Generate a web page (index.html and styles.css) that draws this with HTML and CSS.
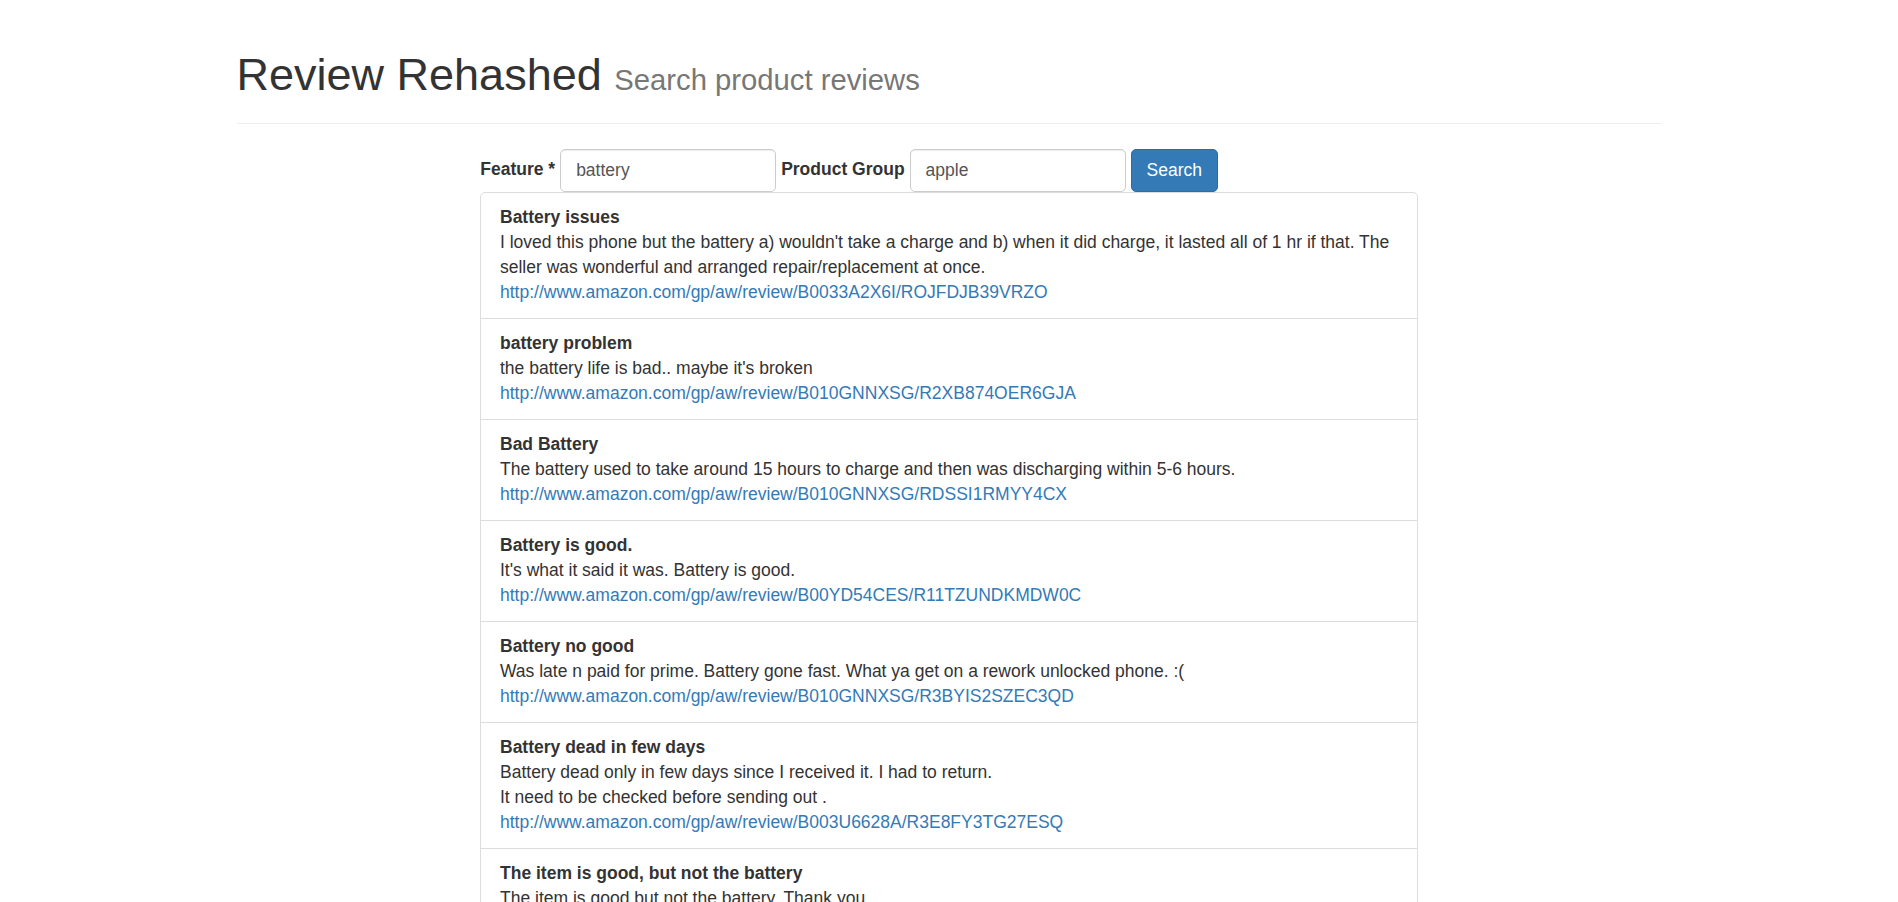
FILE: index.html
```html
<!DOCTYPE html>
<html lang="en">
<head>
<meta charset="utf-8">
<title>Review Rehashed</title>
<link rel="stylesheet" href="styles.css">
</head>
<body>
<div class="container">
  <div class="page-header">
    <h1>Review Rehashed <small>Search product reviews</small></h1>
  </div>
  <div class="main">
    <form class="search-form">
      <label for="feature">Feature *</label>
      <input id="feature" class="form-control" type="text" value="battery">
      <label for="group">Product Group</label>
      <input id="group" class="form-control" type="text" value="apple">
      <button type="button" class="btn">Search</button>
    </form>
    <div class="list-group">
      <div class="list-group-item">
        <div class="title">Battery issues</div>
        <div class="text">I loved this phone but the battery a) wouldn't take a charge and b) when it did charge, it lasted all of 1 hr if that. The seller was wonderful and arranged repair/replacement at once.</div>
        <a href="#">http://www.amazon.com/gp/aw/review/B0033A2X6I/ROJFDJB39VRZO</a>
      </div>
      <div class="list-group-item">
        <div class="title">battery problem</div>
        <div class="text">the battery life is bad.. maybe it's broken</div>
        <a href="#">http://www.amazon.com/gp/aw/review/B010GNNXSG/R2XB874OER6GJA</a>
      </div>
      <div class="list-group-item">
        <div class="title">Bad Battery</div>
        <div class="text">The battery used to take around 15 hours to charge and then was discharging within 5-6 hours.</div>
        <a href="#">http://www.amazon.com/gp/aw/review/B010GNNXSG/RDSSI1RMYY4CX</a>
      </div>
      <div class="list-group-item">
        <div class="title">Battery is good.</div>
        <div class="text">It's what it said it was. Battery is good.</div>
        <a href="#">http://www.amazon.com/gp/aw/review/B00YD54CES/R11TZUNDKMDW0C</a>
      </div>
      <div class="list-group-item">
        <div class="title">Battery no good</div>
        <div class="text">Was late n paid for prime. Battery gone fast. What ya get on a rework unlocked phone. :(</div>
        <a href="#">http://www.amazon.com/gp/aw/review/B010GNNXSG/R3BYIS2SZEC3QD</a>
      </div>
      <div class="list-group-item">
        <div class="title">Battery dead in few days</div>
        <div class="text">Battery dead only in few days since I received it. I had to return.<br>It need to be checked before sending out .</div>
        <a href="#">http://www.amazon.com/gp/aw/review/B003U6628A/R3E8FY3TG27ESQ</a>
      </div>
      <div class="list-group-item">
        <div class="title">The item is good, but not the battery</div>
        <div class="text">The item is good,but not the battery. Thank you.</div>
        <a href="#">http://www.amazon.com/gp/aw/review/B00YD54CES/R2KQ7V1N3XJ5QD</a>
      </div>
    </div>
  </div>
</div>
</body>
</html>
```
FILE: styles.css
```css
* {
  box-sizing: border-box;
}

html, body {
  margin: 0;
  padding: 0;
  background: #fff;
}

body {
  font-family: "Liberation Sans", Arial, Helvetica, sans-serif;
  font-size: 17.5px;
  line-height: 25px;
  color: #333;
}

.container {
  width: 1462.5px;
  margin: 0 auto;
  padding: 0 18.75px;
}

.page-header {
  margin: 50px 0 25px;
  padding-bottom: 11.25px;
  border-bottom: 1px solid #eee;
}

.page-header h1 {
  margin: 0 0 12.5px;
  font-size: 45px;
  line-height: 49.5px;
  font-weight: 500;
  color: #333;
}

.page-header h1 small {
  font-size: 29.25px;
  line-height: 1;
  font-weight: 400;
  color: #777;
}

.main {
  width: 937.5px;
  margin-left: 243.75px;
}

.search-form {
  display: flex;
  align-items: center;
  gap: 5px;
}

.search-form label {
  font-weight: 700;
  margin-bottom: 3px;
}

.form-control {
  width: 216px;
  height: 42.5px;
  padding: 7.5px 15px;
  font-family: inherit;
  font-size: 17.5px;
  line-height: 25px;
  color: #555;
  background: #fff;
  border: 1px solid #ccc;
  border-radius: 5px;
  box-shadow: inset 0 1px 1px rgba(0, 0, 0, 0.075);
  outline: none;
}

.btn {
  height: 42.5px;
  padding: 7.5px 15px;
  font-family: inherit;
  font-size: 17.5px;
  line-height: 25px;
  color: #fff;
  background: #337ab7;
  border: 1px solid #2e6da4;
  border-radius: 5px;
  cursor: pointer;
}

.list-group {
  display: flex;
  flex-direction: column;
}

.list-group-item {
  padding: 12.5px 18.75px;
  border: 1px solid #ddd;
  margin-bottom: -1px;
  background: #fff;
}

.list-group-item:first-child {
  border-top-left-radius: 5px;
  border-top-right-radius: 5px;
}

.list-group-item .title {
  font-weight: 700;
}

.list-group-item a {
  color: #337ab7;
  text-decoration: none;
}
```
